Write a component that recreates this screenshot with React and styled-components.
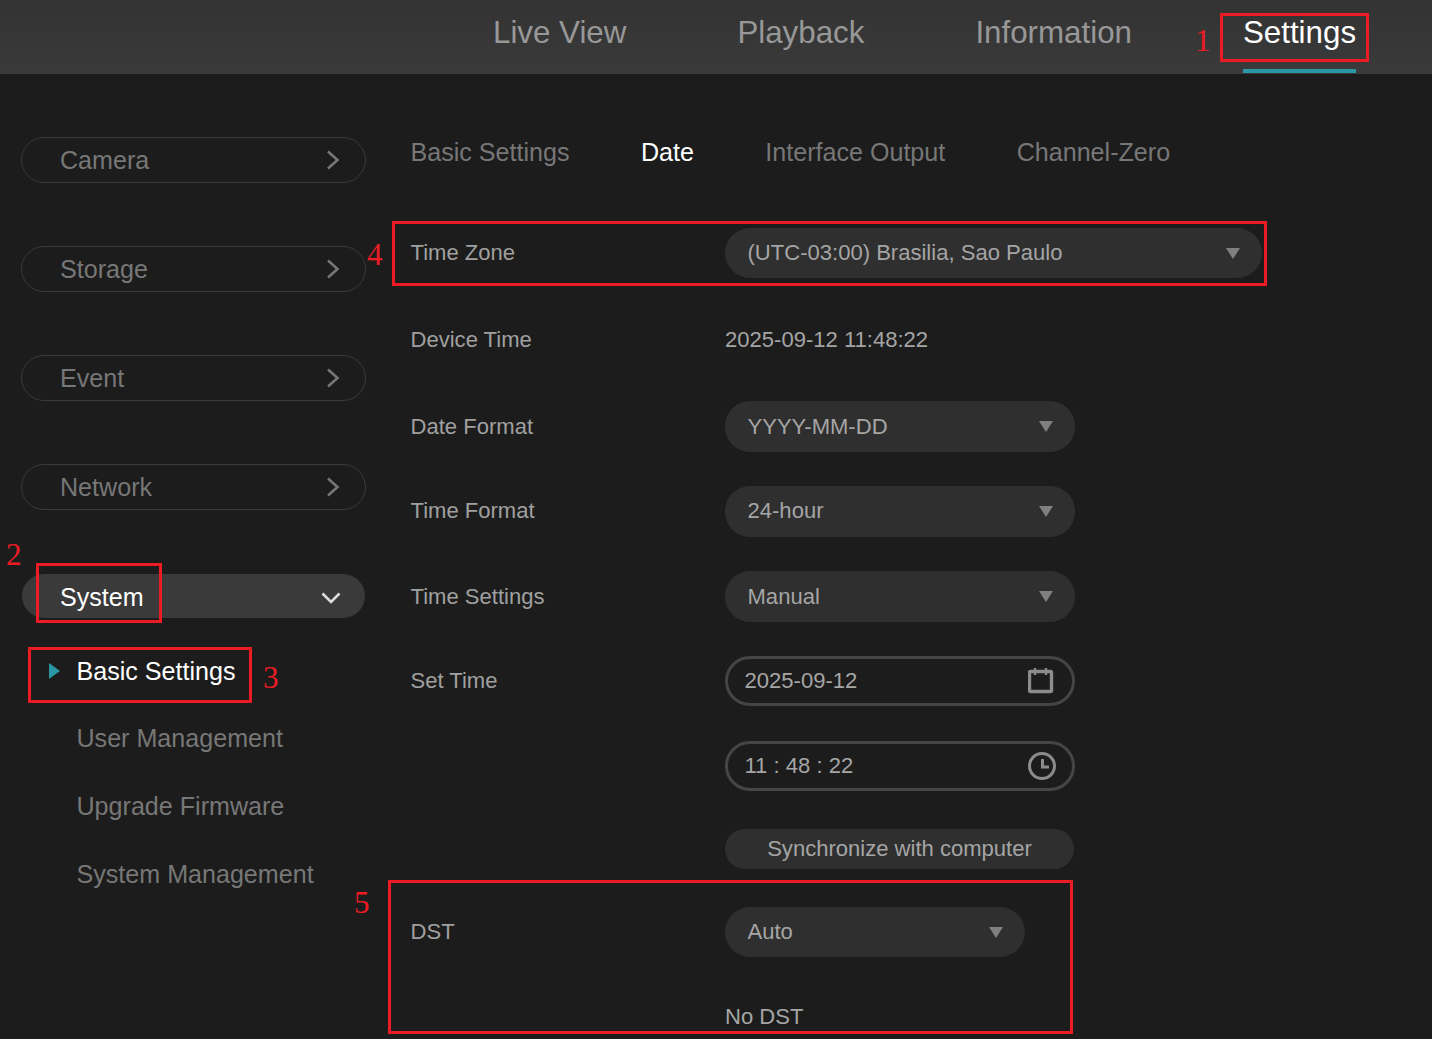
import React from "react";
import styled, { createGlobalStyle } from "styled-components";

const Global = createGlobalStyle`
  html, body { margin: 0; padding: 0; background: #1c1c1c; }
  body { font-family: "Liberation Sans", Arial, sans-serif; overflow: hidden; }
`;

const Page = styled.div`
  position: relative;
  width: 1432px;
  height: 1039px;
  overflow: hidden;
  background: #1c1c1c;
`;

const Header = styled.header`
  display: flex;
  height: 74px;
  padding-left: 493px;
  gap: 111px;
  background: linear-gradient(#333333, #3a3a3a);
  box-sizing: border-box;
`;

const NavItem = styled.div`
  height: 73px;
  box-sizing: border-box;
  padding-top: 15px;
  font-size: 31.3px;
  line-height: 36px;
  color: ${(p) => (p.$active ? "#ffffff" : "#989898")};
  border-bottom: 4px solid ${(p) => (p.$active ? "#2a98a4" : "transparent")};
`;

const Main = styled.main`
  display: flex;
  padding-left: 21px;
  gap: 44.5px;
`;

const Sidebar = styled.aside`
  width: 345px;
  padding-top: 63px;
  display: flex;
  flex-direction: column;
`;

const MenuPill = styled.div`
  display: flex;
  align-items: center;
  justify-content: space-between;
  box-sizing: border-box;
  height: ${(p) => (p.$open ? "44px" : "46px")};
  margin: ${(p) => (p.$open ? "1px 1px 0" : "0 0 63px")};
  padding: ${(p) => (p.$open ? "2px 24px 0 38px" : "0 25px 0 38px")};
  border-radius: 23px;
  border: ${(p) => (p.$open ? "none" : "1px solid #3a3a3a")};
  background: ${(p) => (p.$open ? "#3a3a3a" : "transparent")};
  color: ${(p) => (p.$open ? "#ffffff" : "#777777")};
  font-size: 25.1px;
`;

const SubMenu = styled.div`
  display: flex;
  flex-direction: column;
  padding-top: 38px;
  padding-left: 27px;
  gap: 38px;
`;

const SubItem = styled.div`
  display: flex;
  align-items: center;
  height: 30px;
  padding-left: 28.5px;
  margin-bottom: ${(p) => (p.$active ? "-1px" : "0")};
  position: relative;
  font-size: 25.1px;
  color: ${(p) => (p.$active ? "#ffffff" : "#777777")};
`;

const ActiveCaret = styled.span`
  position: absolute;
  left: 1px;
  top: 7px;
  width: 0;
  height: 0;
  border-top: 8px solid transparent;
  border-bottom: 8px solid transparent;
  border-left: 11px solid #2a98a4;
`;

const Content = styled.section`
  flex: 1;
  display: flex;
  flex-direction: column;
  padding-top: 63px;
`;

const Tabs = styled.div`
  display: flex;
  gap: 71.4px;
  height: 32px;
  margin-bottom: 59px;
`;

const Tab = styled.div`
  font-size: 25.1px;
  line-height: 30px;
  color: ${(p) => (p.$active ? "#ffffff" : "#777777")};
`;

const Row = styled.div`
  display: flex;
  align-items: center;
  height: ${(p) => p.$h || 50}px;
  margin-top: ${(p) => p.$mt || 0}px;
`;

const Label = styled.div`
  width: 314.5px;
  font-size: 22.05px;
  color: #a0a0a0;
`;

const Value = styled.div`
  font-size: 22.05px;
  color: #a5a5a5;
  margin-left: ${(p) => p.$ml || 0}px;
`;

const Select = styled.div`
  display: flex;
  align-items: center;
  justify-content: space-between;
  box-sizing: border-box;
  width: ${(p) => p.$w || 350}px;
  height: 100%;
  padding: 0 22px 0 22.5px;
  border-radius: 25px;
  background: #2f2f2f;
  font-size: 22.05px;
  color: #a5a5a5;
`;

const Caret = styled.span`
  width: 0;
  height: 0;
  border-left: 7px solid transparent;
  border-right: 7px solid transparent;
  border-top: 11px solid #808080;
`;

const InputBox = styled.div`
  display: flex;
  align-items: center;
  justify-content: space-between;
  box-sizing: border-box;
  width: 350px;
  height: 100%;
  padding: 0 ${(p) => p.$pr}px 0 16.5px;
  border-radius: 26px;
  border: 3px solid #454545;
  font-size: 22.05px;
  color: #a5a5a5;
`;

const SyncButton = styled.div`
  display: flex;
  align-items: center;
  justify-content: center;
  width: 349px;
  height: 40px;
  margin-left: 314.5px;
  border-radius: 20px;
  background: #2f2f2f;
  font-size: 22.05px;
  color: #a5a5a5;
`;

const RedBox = styled.div`
  position: absolute;
  box-sizing: border-box;
  left: ${(p) => p.$x}px;
  top: ${(p) => p.$y}px;
  width: ${(p) => p.$w}px;
  height: ${(p) => p.$h}px;
  border: 3px solid #ed1c24;
`;

const RedNumber = styled.div`
  position: absolute;
  left: ${(p) => p.$x}px;
  top: ${(p) => p.$y}px;
  font-family: "Liberation Serif", "Times New Roman", serif;
  font-size: 31px;
  line-height: 36px;
  color: #ed1c24;
`;

const DownSvg = styled.svg`
  margin-top: 2px;
`;

const ChevronRight = () => (
  <svg width="14" height="20" viewBox="0 0 14 20" fill="none">
    <path d="M2 1.5 L11.5 10 L2 18.5" stroke="#777777" strokeWidth="2.6" />
  </svg>
);

const ChevronDown = () => (
  <DownSvg width="20" height="12" viewBox="0 0 20 12" fill="none">
    <path d="M1.5 1.5 L10 10 L18.5 1.5" stroke="#dddddd" strokeWidth="2.6" />
  </DownSvg>
);

const CalendarIcon = () => (
  <svg width="26" height="26" viewBox="0 0 26 26" fill="none">
    <rect x="1.5" y="3.5" width="22" height="20" rx="1" stroke="#8c8c8c" strokeWidth="3.4" />
    <path d="M7 0 V7 M18 0 V7" stroke="#8c8c8c" strokeWidth="2.4" />
  </svg>
);

const ClockIcon = () => (
  <svg width="28" height="28" viewBox="0 0 28 28" fill="none">
    <circle cx="14" cy="14" r="12.5" stroke="#8c8c8c" strokeWidth="3" />
    <path d="M14.5 7 V15 H21" stroke="#8c8c8c" strokeWidth="3" />
  </svg>
);

const NAV = ["Live View", "Playback", "Information", "Settings"];
const TABS = ["Basic Settings", "Date", "Interface Output", "Channel-Zero"];
const MENU = ["Camera", "Storage", "Event", "Network"];
const SUB = ["Basic Settings", "User Management", "Upgrade Firmware", "System Management"];

export default function App() {
  return (
    <Page>
      <Global />
      <Header>
        {NAV.map((n) => (
          <NavItem key={n} $active={n === "Settings"}>{n}</NavItem>
        ))}
      </Header>
      <Main>
        <Sidebar>
          {MENU.map((m) => (
            <MenuPill key={m}>
              {m}
              <ChevronRight />
            </MenuPill>
          ))}
          <MenuPill $open>
            System
            <ChevronDown />
          </MenuPill>
          <SubMenu>
            {SUB.map((s, i) => (
              <SubItem key={s} $active={i === 0}>
                {i === 0 && <ActiveCaret />}
                {s}
              </SubItem>
            ))}
          </SubMenu>
        </Sidebar>
        <Content>
          <Tabs>
            {TABS.map((t) => (
              <Tab key={t} $active={t === "Date"}>{t}</Tab>
            ))}
          </Tabs>
          <Row>
            <Label>Time Zone</Label>
            <Select $w={537}>(UTC-03:00) Brasilia, Sao Paulo<Caret /></Select>
          </Row>
          <Row $mt={37}>
            <Label>Device Time</Label>
            <Value>2025-09-12 11:48:22</Value>
          </Row>
          <Row $mt={36} $h={51}>
            <Label>Date Format</Label>
            <Select>YYYY-MM-DD<Caret /></Select>
          </Row>
          <Row $mt={34} $h={50.5}>
            <Label>Time Format</Label>
            <Select>24-hour<Caret /></Select>
          </Row>
          <Row $mt={34.5} $h={51}>
            <Label>Time Settings</Label>
            <Select>Manual<Caret /></Select>
          </Row>
          <Row $mt={34} $h={50}>
            <Label>Set Time</Label>
            <InputBox $pr={18}>2025-09-12<CalendarIcon /></InputBox>
          </Row>
          <Row $mt={35}>
            <Label />
            <InputBox $pr={16}>11 : 48 : 22<ClockIcon /></InputBox>
          </Row>
          <Row $mt={38} $h={40}>
            <SyncButton>Synchronize with computer</SyncButton>
          </Row>
          <Row $mt={38}>
            <Label>DST</Label>
            <Select $w={300}>Auto<Caret /></Select>
          </Row>
          <Row $mt={35}>
            <Value $ml={314.5}>No DST</Value>
          </Row>
        </Content>
      </Main>

      <RedBox $x={1220} $y={13} $w={149} $h={49} />
      <RedBox $x={392} $y={221} $w={875} $h={65} />
      <RedBox $x={36} $y={563} $w={126} $h={60} />
      <RedBox $x={28} $y={647} $w={224} $h={56} />
      <RedBox $x={388} $y={880} $w={685} $h={154} />
      <RedNumber $x={1195} $y={23}>1</RedNumber>
      <RedNumber $x={6} $y={537}>2</RedNumber>
      <RedNumber $x={263} $y={660}>3</RedNumber>
      <RedNumber $x={367} $y={237}>4</RedNumber>
      <RedNumber $x={354} $y={885}>5</RedNumber>
    </Page>
  );
}
